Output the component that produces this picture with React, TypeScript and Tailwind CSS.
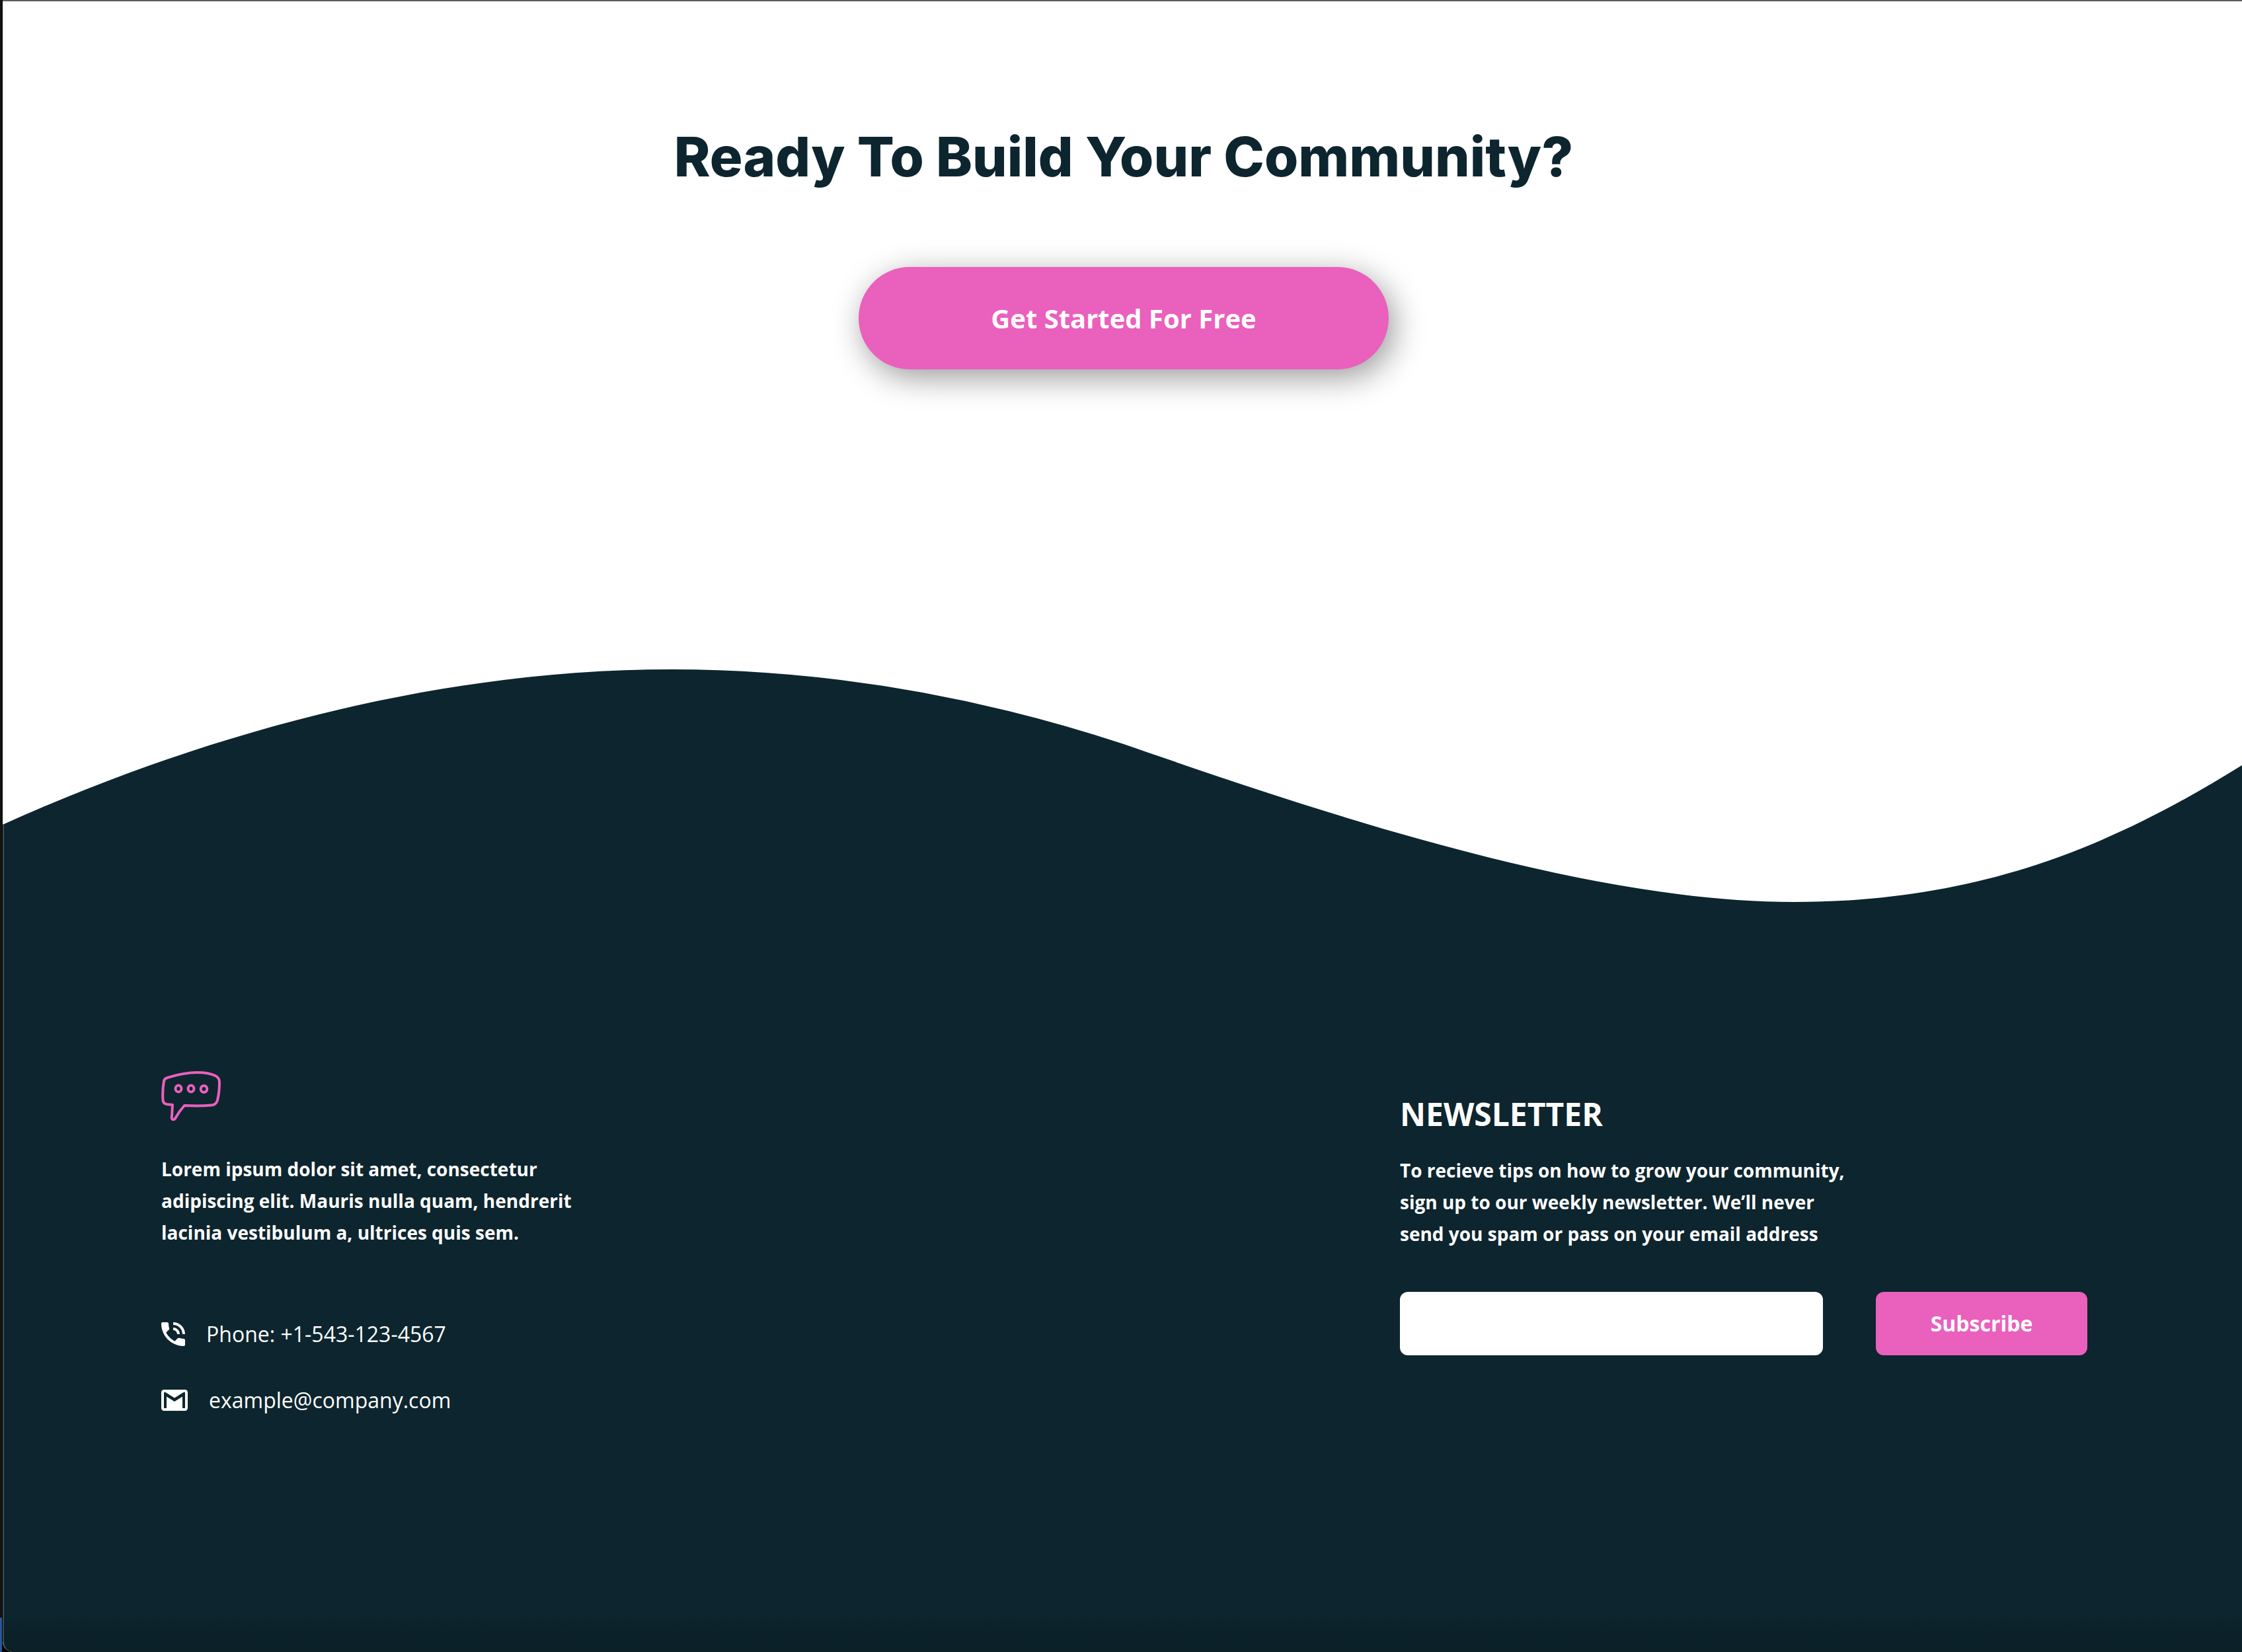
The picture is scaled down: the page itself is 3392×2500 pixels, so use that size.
import type { ReactNode } from "react";

const PhoneIcon = () => (
  <svg viewBox="3 3 18 18" className="size-9" fill="currentColor" aria-hidden="true">
    <path d="M20 15.5c-1.25 0-2.45-.2-3.57-.57a1.02 1.02 0 0 0-1.02.24l-2.2 2.2a15.045 15.045 0 0 1-6.59-6.59l2.2-2.21a.96.96 0 0 0 .25-1A11.36 11.36 0 0 1 8.5 4c0-.55-.45-1-1-1H4c-.55 0-1 .45-1 1 0 9.39 7.61 17 17 17 .55 0 1-.45 1-1v-3.5c0-.55-.45-1-1-1zM19 12h2a9 9 0 0 0-9-9v2c3.87 0 7 3.13 7 7zm-4 0h2c0-2.76-2.24-5-5-5v2c1.66 0 3 1.34 3 3z" />
  </svg>
);

const MailIcon = () => (
  <svg viewBox="0 0 20 16" className="h-8 w-10" fill="currentColor" fillRule="evenodd" aria-hidden="true">
    <path d="M18 0H2C.9 0 0 .9 0 2v12c0 1.1.9 2 2 2h16c1.1 0 2-.9 2-2V2c0-1.1-.9-2-2-2zM18 14h-2V5.250L10 9 4 5.250V14H2V2h1.200L10 6.250 16.800 2H18v12z" />
  </svg>
);

const ChatLogo = () => (
  <svg viewBox="0 0 90 76" className="h-19 w-[90px]" fill="none" stroke="#ea60bd" strokeWidth="4" strokeLinejoin="round" aria-hidden="true">
    <path d="M4 15Q5 11 9 10Q34 2 54 2Q72 2 82 7Q88 10 88 17Q88 32 85 44Q83 51 76 51.500Q60 53 35 52Q27 61 22 70Q20 74 17 73Q15 72 16 68L17 51L8 50Q3 49 2.500 44Q1.500 29 4 15Z" />
    <ellipse cx="26" cy="26.500" rx="4.500" ry="5" />
    <ellipse cx="45" cy="26.500" rx="4.500" ry="5" />
    <ellipse cx="64.500" cy="27" rx="4.800" ry="5" />
  </svg>
);

const Contact = ({ href, icon, children }: { href: string; icon: ReactNode; children: ReactNode }) => (
  <a href={href} className="flex items-center gap-8 text-[32px] leading-[44px]">
    {icon}
    <span>{children}</span>
  </a>
);

export default function App() {
  return (
    <div className="flex min-h-screen bg-black font-['Open_Sans',sans-serif]">
      <div className="mr-px flex w-[3px] flex-col">
        <div className="flex-1 bg-[#151210]" />
        <div className="h-13 bg-[#2b5797]" />
      </div>
      <div className="flex flex-1 flex-col overflow-hidden rounded-bl-2xl border-t-2 border-[#5f5b61] bg-white">
        <main className="flex flex-col items-center pt-44 pl-1">
          <h1 className="font-[Inter,sans-serif] text-[83px] leading-[118px] font-extrabold text-[#0d252e]">
            Ready To Build Your Community?
          </h1>
          <button
            type="button"
            className="mt-27 h-[155px] w-[802px] rounded-full bg-[#ea60bd] text-[40px] font-bold text-white shadow-[8px_12px_48px_rgba(0,0,0,0.4)]"
          >
            Get Started For Free
          </button>
        </main>

        <svg viewBox="0 0 3388 380" className="mt-[442px] block w-full" fill="#0d252e" aria-hidden="true">
          <path d="M0 247C337 95 686 12 1010 12Q1353 12 1696 125C1996 229 2396 364 2710 364C2986 364 3186 283 3388 157V381H0Z" />
          <path d="M0 247L2 246V381H0Z" fill="#3b4d55" />
        </svg>

        <footer className="flex flex-1 items-start justify-between rounded-bl-2xl border-l-2 border-[#3b4d55] bg-[#0d252e] bg-linear-to-t from-[#0a1f26] to-[#0d252e] to-[64px] pt-60 pr-[234px] pb-24 pl-[238px] text-white">
          <section>
            <ChatLogo />
            <p className="mt-12 w-[640px] text-[28px] leading-[48px] font-bold">
              Lorem ipsum dolor sit amet, consectetur adipiscing elit. Mauris nulla quam, hendrerit lacinia vestibulum a, ultrices quis sem.
            </p>
            <address className="mt-27 flex flex-col gap-14 not-italic">
              <Contact href="tel:+15431234567" icon={<PhoneIcon />}>Phone: +1-543-123-4567</Contact>
              <Contact href="mailto:example@company.com" icon={<MailIcon />}>example@company.com</Contact>
            </address>
          </section>

          <section className="mt-8">
            <h2 className="text-[48px] leading-[66px] font-bold">NEWSLETTER</h2>
            <p className="mt-7 w-[700px] text-[28px] leading-[48px] font-bold">
              To recieve tips on how to grow your community, sign up to our weekly newsletter. We’ll never send you spam or pass on your email address
            </p>
            <form className="mt-16 flex gap-20" onSubmit={(e) => e.preventDefault()}>
              <input type="email" aria-label="Email address" className="h-24 w-[640px] rounded-xl bg-white px-6 text-[32px] text-[#0d252e]" />
              <button type="submit" className="h-24 w-80 rounded-xl bg-[#ea60bd] text-[32px] font-bold">
                Subscribe
              </button>
            </form>
          </section>
        </footer>
      </div>
    </div>
  );
}
